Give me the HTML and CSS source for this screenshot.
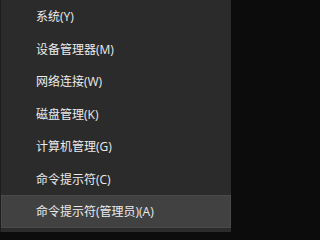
FILE: index.html
```html
<!DOCTYPE html>
<html>
<head>
<meta charset="utf-8">
<link rel="stylesheet" href="styles.css">
</head>
<body>
<div class="menu">
  <div class="item">系统(Y)</div>
  <div class="item">设备管理器(M)</div>
  <div class="item">网络连接(W)</div>
  <div class="item">磁盘管理(K)</div>
  <div class="item">计算机管理(G)</div>
  <div class="item">命令提示符(C)</div>
  <div class="item active">命令提示符(管理员)(A)</div>
</div>
</body>
</html>
```
FILE: styles.css
```css
html, body {
  margin: 0;
  padding: 0;
  background: #0c0c0c;
}
body {
  width: 234px;
  height: 232px;
  overflow: hidden;
}
.menu {
  width: 230px;
  height: 232px;
  background: #2b2b2b;
  border-left: 1px solid #1e1e1e;
  display: flex;
  flex-direction: column;
}
.item {
  height: 32.5px;
  flex: none;
  display: flex;
  align-items: center;
  padding-left: 35px;
  box-sizing: border-box;
  font-family: "Open Sans", "Noto Sans CJK SC", sans-serif;
  font-size: 12px;
  color: #ececec;
  white-space: nowrap;
}
.item.active {
  background: #414141;
  box-shadow: inset 0 0 0 1px #4a4a4a;
}
```
